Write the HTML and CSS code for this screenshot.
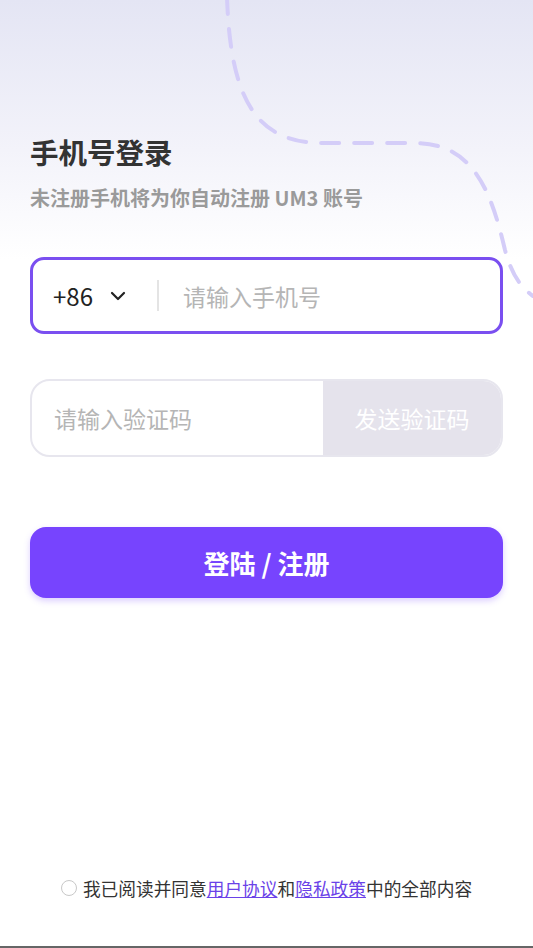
FILE: index.html
```html
<!DOCTYPE html>
<html lang="zh-CN">
<head>
  <meta charset="UTF-8" />
  <meta name="viewport" content="width=device-width, initial-scale=1.0"/>
  <title>手机号登录</title>
  <link rel="stylesheet" href="styles.css">
</head>
<body>
  <div class="page">
    <svg class="deco" width="533" height="320" viewBox="0 0 533 320">
      <path d="M227 -4 C230 97 255 143 322 143 L415 143 C475 143 492 195 505 250 C511 272 519 286 533 296" />
    </svg>

    <div class="header">
      <div class="title">手机号登录</div>
      <div class="subtitle">未注册手机将为你自动注册 UM3 账号</div>
    </div>

    <div class="field field-phone">
      <span class="code">+86</span>
      <svg class="chevron" width="16" height="10" viewBox="0 0 16 10">
        <path d="M2 2 L8 8 L14 2" />
      </svg>
      <span class="divider"></span>
      <span class="placeholder">请输入手机号</span>
    </div>

    <div class="field field-code">
      <span class="placeholder">请输入验证码</span>
      <span class="send">发送验证码</span>
    </div>

    <div class="login-btn">登陆 / 注册</div>

    <div class="agree">
      <span class="radio"></span>
      <span>我已阅读并同意<a href="#">用户协议</a>和<a href="#">隐私政策</a>中的全部内容</span>
    </div>
  </div>
</body>
</html>
```

FILE: styles.css
```css
body {
  margin: 0;
  font-family: "Noto Sans CJK SC", "Noto Sans", sans-serif;
  background: #ffffff;
}

.page {
  position: relative;
  height: 948px;
  box-sizing: border-box;
  padding: 0 30px;
  display: flex;
  flex-direction: column;
  background: linear-gradient(180deg, #e4e5f4 0px, #f3f3fa 150px, #ffffff 260px);
  border-bottom: 2px solid #666;
  overflow: hidden;
}

.deco {
  position: absolute;
  left: 0;
  top: 0;
}

.deco path {
  fill: none;
  stroke: #d4cdf8;
  stroke-width: 4;
  stroke-dasharray: 18 15;
  stroke-linecap: round;
}

.header {
  position: relative;
  padding-top: 132px;
}

.title {
  font-size: 28.5px;
  line-height: 40px;
  font-weight: bold;
  color: #333;
}

.subtitle {
  margin-top: 12px;
  font-size: 20px;
  line-height: 28px;
  font-weight: bold;
  color: #9a9a9a;
}

.field {
  position: relative;
  display: flex;
  align-items: center;
  box-sizing: border-box;
  background: #fff;
  font-size: 23px;
}

.field-phone {
  margin-top: 45px;
  height: 77px;
  border: 3px solid #7a4ff0;
  border-radius: 14px;
  padding-left: 20px;
}

.code {
  color: #222;
  font-size: 24px;
}

.chevron {
  margin-left: 17px;
}

.chevron path {
  fill: none;
  stroke: #222;
  stroke-width: 2.2;
  stroke-linecap: round;
  stroke-linejoin: round;
}

.divider {
  width: 2px;
  height: 31px;
  background: #e4e4e4;
  margin: 0 24px 0 31px;
}

.placeholder {
  color: #b5b5b5;
}

.field-code {
  margin-top: 45px;
  height: 78px;
  border: 2px solid #e7e6ee;
  border-radius: 20px;
  padding-left: 22px;
  overflow: hidden;
}

.field-code .placeholder {
  flex: 1;
}

.send {
  align-self: stretch;
  width: 178px;
  display: flex;
  align-items: center;
  justify-content: center;
  background: #e5e3ec;
  color: #fff;
}

.login-btn {
  margin-top: 70px;
  height: 71px;
  border-radius: 16px;
  background: #7744fe;
  color: #fff;
  font-size: 26px;
  font-weight: bold;
  display: flex;
  align-items: center;
  justify-content: center;
  box-shadow: 0 3px 6px rgba(119, 68, 254, 0.25);
}

.agree {
  margin-top: auto;
  margin-bottom: 46px;
  display: flex;
  align-items: center;
  justify-content: center;
  font-size: 17.7px;
  line-height: 24px;
  color: #333;
}

.radio {
  width: 14px;
  height: 14px;
  border: 1.5px solid #c8c8c8;
  border-radius: 50%;
  margin-right: 6px;
}

.agree a {
  color: #6a42e8;
  text-decoration: underline;
}
```
